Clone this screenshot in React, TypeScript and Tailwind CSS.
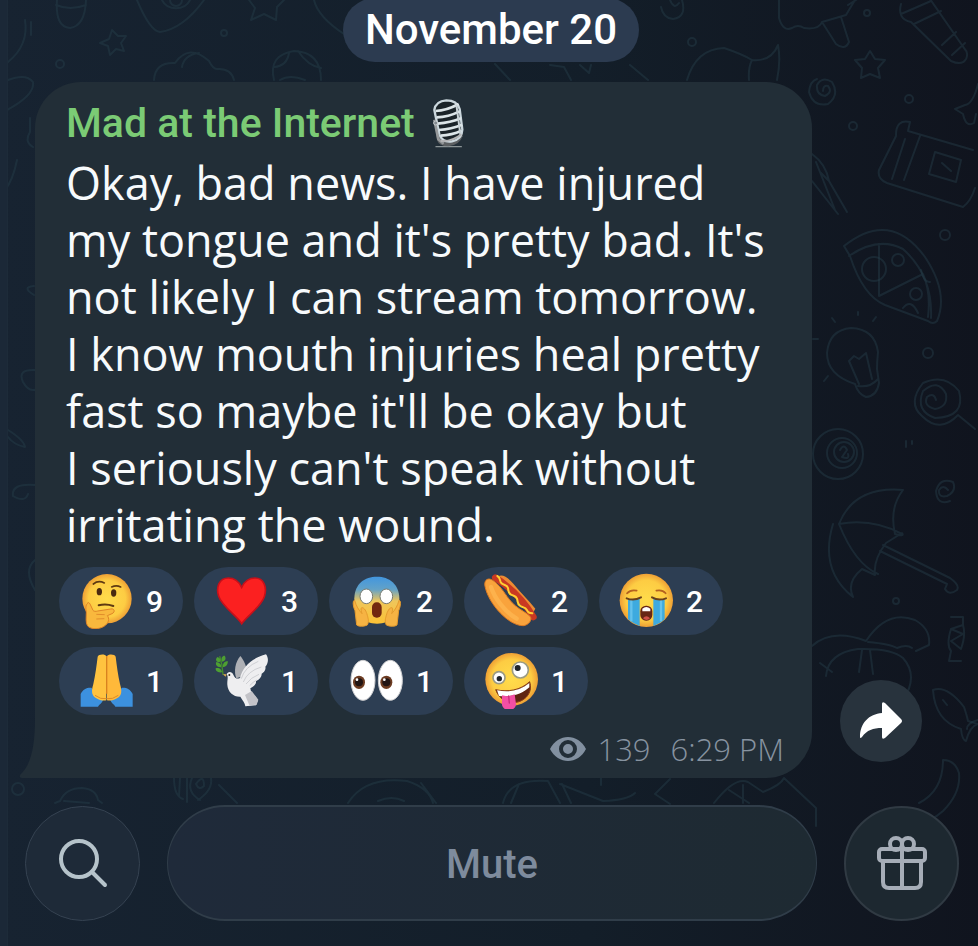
import type { ReactNode } from 'react'

type Reaction = {
  name: string
  count: number
  art: ReactNode
}

const message = [
  'Okay, bad news. I have injured',
  "my tongue and it's pretty bad. It's",
  'not likely I can stream tomorrow.',
  'I know mouth injuries heal pretty',
  "fast so maybe it'll be okay but",
  "I seriously can't speak without",
  'irritating the wound.',
].join('\n')

const reactions: Reaction[] = [
  {
    name: 'Thinking',
    count: 9,
    art: (
      <>
        <circle cx="87" cy="77" r="74" fill="url(#face)" />
        <path d="M46 33q15-12 33-3M101 42q14-7 27 0" stroke="#5f3a12" strokeWidth="5" fill="none" strokeLinecap="round" />
        <ellipse cx="64" cy="56" rx="8" ry="11" fill="#4a2a10" />
        <ellipse cx="107" cy="60" rx="8" ry="11" fill="#4a2a10" />
        <path d="M62 97q22-6 44 2" stroke="#5f3a12" strokeWidth="6" fill="none" strokeLinecap="round" />
        <path
          d="M29 91c-7 4-6 17-4 27 0 15-3 31 4 41 10 11 35 10 49 1 15-9 17-24 10-32l14-6c11-5 7-17-4-14l-39 6c-6 2-12 1-14-2l-9-19c-3-6-8-5-7-2z"
          fill="#f9b83d"
          stroke="#df8527"
          strokeWidth="3"
        />
        <path d="M55 124l25 1M55 138l24-1" stroke="#e18d2b" strokeWidth="3" fill="none" />
      </>
    ),
  },
  {
    name: 'Heart',
    count: 3,
    art: (
      <path
        d="M86 152C72 129 27 100 17 70 8 42 19 15 46 15c19 0 33 13 40 28 7-15 21-28 40-28 27 0 37 28 28 56-10 30-52 58-68 81z"
        fill="#fb2020"
        stroke="#c6101a"
        strokeWidth="5"
      />
    ),
  },
  {
    name: 'Screaming in fear',
    count: 2,
    art: (
      <>
        <path d="M19 76C20 32 50 11 87 11s66 22 67 65c1 50-26 76-67 76s-69-27-68-76z" fill="url(#fear)" />
        <ellipse cx="55" cy="70" rx="19" ry="22" fill="#fff" stroke="#777b72" strokeWidth="3" />
        <ellipse cx="115" cy="70" rx="19" ry="22" fill="#fff" stroke="#777b72" strokeWidth="3" />
        <rect x="72" y="88" width="29" height="46" rx="14" fill="#72270f" />
        <path
          d="M20 82c-7 0-5 18 1 31l5 43c5 5 23 5 32 0 6-10 2-22 0-29-3-12-9-23-16-23-5 0-2 12 0 18-9-10-18-23-22-40zM153 82c7 0 5 18-1 31l-5 43c-5 5-23 5-32 0-6-10-2-22 0-29 3-12 9-23 16-23 5 0 2 12 0 18 9-10 18-23 22-40z"
          fill="#f6b343"
          stroke="#e49a2e"
          strokeWidth="3"
        />
      </>
    ),
  },
  {
    name: 'Hot dog',
    count: 2,
    art: (
      <>
        <path d="M46 10c13-8 31 6 45 22 23 28 47 51 66 75l-9 16C118 78 81 49 46 10z" fill="#ed8b32" />
        <path d="M37 14c46 30 87 72 114 118" stroke="#c93822" strokeWidth="20" fill="none" strokeLinecap="round" />
        <path d="M6 40c-4-20 10-28 25-17 32 24 38 52 67 76 17 14 33 20 44 32 6 10-5 25-21 27C78 159 17 94 6 40z" fill="#f9a33c" stroke="#de7b22" strokeWidth="3" />
        <path d="M24 42c11 34 41 74 77 95" stroke="#ffb852" strokeWidth="13" fill="none" strokeLinecap="round" opacity=".7" />
        <path d="M43 9c12 5 4 17 14 23 11 7 15 3 18 13 2 9-1 14 9 20 10 5 14 2 18 12 3 9 0 15 9 21 9 7 15 4 20 12 4 8 6 10 17 11" stroke="#ffcf32" strokeWidth="6" fill="none" strokeLinecap="round" />
      </>
    ),
  },
  {
    name: 'Loudly crying',
    count: 2,
    art: (
      <>
        <circle cx="85" cy="82" r="80" fill="url(#face)" />
        <path d="M27 61q11-12 29-8M115 53q18-4 28 8" stroke="#b4611f" strokeWidth="5" fill="none" strokeLinecap="round" />
        <path d="M30 78h35v81q-18-6-35-20zM106 78h34v61q-15 14-34 20z" fill="#3daadf" />
        <path d="M40 80v65M129 80v65" stroke="#65c2ec" strokeWidth="7" />
        <path d="M26 76q21 9 43-3M102 73q20 12 42 3" stroke="#69401b" strokeWidth="6" fill="none" strokeLinecap="round" />
        <rect x="67" y="98" width="36" height="45" rx="17" fill="#672614" />
        <path d="M73 107q12-10 24 0v8H73z" fill="#fff" />
        <path d="M75 136q10-13 21 0-10 10-21 0z" fill="#ce5146" />
      </>
    ),
  },
  {
    name: 'Folded hands',
    count: 1,
    art: (
      <>
        <path d="M8 123c7-15 19-20 32-19l35 38c-2 8-12 13-15 19H8zM164 123c-7-15-19-20-32-19l-35 38c2 8 12 13 15 19h52z" fill="#3c91df" />
        <path d="M59 11c2-8 23-9 26-1v132c-13 3-32-3-40-15-5-9-3-20 1-34 6-26 10-58 13-82z" fill="#ffc33f" />
        <path d="M113 11c-2-8-23-9-26-1v132c13 3 32-3 40-15 5-9 3-20-1-34-6-26-10-58-13-82z" fill="#ffb93a" />
        <path d="M86 9v113" stroke="#d9821f" strokeWidth="4" />
        <path d="M51 127q17 13 35 10 18 3 35-10" stroke="#e08b25" strokeWidth="3" fill="none" />
      </>
    ),
  },
  {
    name: 'Dove of peace',
    count: 1,
    art: (
      <>
        <path d="M70 76c-8-20-4-48 12-67 10 12 21 31 19 57z" fill="#aeb0b5" />
        <path d="M41 63c5-9 16-8 20 2 5 11 11 14 20 10 8-34 36-60 78-71 8 10 8 26-2 37 3 9-5 18-11 21 0 12-10 19-17 22 2 11-9 17-17 22l3 13c9 8 21 19 19 25l-5 13-32 3c-1-10-8-17-15-29-20 1-38-14-39-36-1-15 4-22-2-32z" fill="#eeeef0" />
        <path d="M85 77q10-35 51-52M91 87q13-33 54-45M99 93q15-20 39-29M110 98q10-11 21-17" stroke="#cfd0d4" strokeWidth="3" fill="none" />
        <path d="M96 126l20-12 20 26-5 15-22 2z" fill="#c3c3c8" />
        <circle cx="49" cy="66" r="3" fill="#222" />
        <path d="M38 71l-10-8 13 1z" fill="#d7a653" />
        <path d="M30 65C29 42 25 25 20 10" stroke="#438c2b" strokeWidth="4" fill="none" />
        <path d="M19 28C6 26 8 17 13 12c10 3 12 12 6 16zM27 26c-5-12 3-19 8-18 6 9 1 17-8 18zM24 43C9 42 7 33 10 27c10 1 17 9 14 16zM30 42c-2-12 6-17 14-18 2 10-5 18-14 18zM27 58C13 60 7 53 8 46c10-3 19 4 19 12z" fill="#4d9f32" />
      </>
    ),
  },
  {
    name: 'Eyes',
    count: 1,
    art: (
      <>
        <ellipse cx="45" cy="82" rx="36" ry="60" fill="#fff" stroke="#cfcfd1" strokeWidth="3" />
        <ellipse cx="127" cy="82" rx="36" ry="60" fill="#fff" stroke="#cfcfd1" strokeWidth="3" />
        <ellipse cx="33" cy="88" rx="18" ry="20" fill="#6c3c22" />
        <ellipse cx="115" cy="88" rx="18" ry="20" fill="#6c3c22" />
        <circle cx="33" cy="88" r="12" fill="#211514" />
        <circle cx="115" cy="88" r="12" fill="#211514" />
        <circle cx="27" cy="80" r="4" fill="#fff" />
        <circle cx="109" cy="80" r="4" fill="#fff" />
      </>
    ),
  },
  {
    name: 'Zany face',
    count: 1,
    art: (
      <>
        <circle cx="86" cy="79" r="79" fill="url(#face)" />
        <circle cx="48" cy="74" r="18" fill="#fff" stroke="#9b9b83" strokeWidth="5" />
        <circle cx="112" cy="51" r="24" fill="#fff" stroke="#9b9b83" strokeWidth="5" />
        <circle cx="49" cy="77" r="8" fill="#20252a" />
        <circle cx="104" cy="45" r="9" fill="#20252a" />
        <path d="M38 110c37 8 74 2 102-24 10 31-10 54-35 61-31 8-58-10-67-37z" fill="#5f2512" stroke="#8e4017" strokeWidth="3" />
        <path d="M42 112c37 7 69 1 97-22v13c-23 21-58 31-91 26z" fill="#fff" />
        <path d="M57 127q19 6 38-3l4 29c0 22-36 26-42 3z" fill="#f44fa4" />
        <path d="M77 129l2 21" stroke="#c72c78" strokeWidth="4" strokeLinecap="round" />
      </>
    ),
  },
]

function Doodles() {
  return (
    <svg
      aria-hidden="true"
      viewBox="0 0 978 946"
      preserveAspectRatio="xMidYMin slice"
      className="absolute inset-0 -z-10 h-full w-full"
      fill="none"
      stroke="#27404a"
      strokeOpacity=".44"
      strokeWidth="2"
      strokeLinecap="round"
      strokeLinejoin="round"
    >
      {/* top edge */}
      <path d="M57 0q-2 27 13 28 15-2 16-28M56 5q14 6 30 0M137 0q13 31 23 32 23-3 44-32M162 0a15 13 0 0 0 28 0M170 0a6 6 0 0 0 12 0" />
      <path d="M112 30l6 6 8 0-5 7 3 8-8-2-6 6-2-9-8-3 9-4zM249 0l6 8-4 12 13-6 12 6 1-13 7-7M314 0q4 17 30 34" />
      <path d="M25 20q4 25-17 42M31 22v13M154 80q1-18 21-17 14-20 34-2 4 8 8 8 14-1 17 11M182 67q2-12 17-14" />
      <path d="M274 80q-6-25 20-29 27 1 27 29M274 67q13-1 15-14M298 51q10 15 23 17M280 80q10-6 25 0" />
      <path d="M8 80q18-7 25 2 2 13-26 28M495 64l15 16M550 65l14 2 7 13M580 65l9 8 2-8M630 65l18 15M687 80q9-31 37-32 18 6 28 12 19 2 26-15 3 16-1 35M752 60q-4 8-3 20" />
      <path d="M661 7q2 11 12 12 14-2 9-19M670 0q4 10 9 3M779 0v18q4 14 13 10 6-4 12 0 15 2 18-6l24-7 9-15M822 22l14 22q9 7 13-2l-8-25M848 5l8-5" />
      {/* right side */}
      <path d="M901 4q-4 15 10 18l40 39q11 5 15-2 3-6-2-11l-34-49M901 14l30-13M914 24l27-13M942 45l14-13M952 55l13-12M870 51l5 8 10 1-7 8 2 10-10-4-9 4 1-10-7-8 10-1z" />
      <path d="M823 91q0-6 5-5 5 6-3 10-9-1-8-11 5-9 15-3 8 13-4 22-15 3-19-12 1-11 8-13M978 84q-5 20-13 21l-10 4 8 5q3 14 11 9l2-9M896 135q0-16 14-13l-2 9 65 19M896 136l-17 34q-2 9 8 13l76 24q8-6 12-19M905 139l-13 40M920 136l-16 44M935 152l26 8-5 22-27-8zM942 163l9 8" />
      <path d="M812 154q14 10 17 27l18 31M816 162l19 48M812 181l26 33M829 181l-9-9" />
      <path d="M844 246q46-37 81 11 24 36 12 64-4 4-9 0l-43-16q-22-9-35-49zM849 256q29-20 54-7 30 27 28 69M879 244v52l44-22q8 18 5 43" />
      <circle cx="874" cy="269" r="12" />
      <circle cx="898" cy="260" r="6" />
      <circle cx="916" cy="294" r="6" />
      <path d="M903 308q8-10 15 5M921 270q3 13 9 12M855 384q-28-9-28-31 2-23 24-25 24 1 27 24-1 10-1 17l2 14q-2 13-13 14-8-3-11-13zM859 384l-10-23 5-5 5 3 7-6 6 26M858 386q12 2 20-7M858 315v-3M873 321l3-4M835 322l-3-4M818 339h-5M828 376l-4 5" />
      <path d="M936 400q-2-8-9-3-4 9 8 12 13-2 11-15-8-16-23-3-8 20 12 27 31-1 24-27-14-18-36-8-16 20-1 33 18 18 36-1l17 14" />
      <circle cx="838" cy="454" r="25" />
      <circle cx="842" cy="453" r="15" />
      <circle cx="844" cy="452" r="10" />
      <path d="M840 450q4-7 7 0l-5 7q8 3 6-3M839 524q15-38 64-34-14 18-8 44 10 3 7-1l-16 10q-13 17-11 32l-13-6q-16 13-9 28-34-27-20-73M839 524q33-6 63 10M839 524q16 40 39 50M883 545l67 33q10 7 7 12-8 6-12-1l2-5-67-33M912 441v3M906 441v6" />
      <path d="M948 490q-5-6-9 0-1 8 8 6 10-5 6-14-13-5-17 9 1 15 14 10M812 646q20-18 54-5 21-32 49-21 16 9 14 25l-13 6M868 642q22 2 29 6 10-4 15 0M826 676q2-23 32-27 34-1 45 9 16 18 0 42M820 663l12 9M862 650l-3 22M870 650l3 24" />
      <path d="M951 617h12v8l-12 4q-5 16 0 22l-2 10h12M951 629l12 5-12 7 10 8M963 625q3 10-2 24M933 690q14-5 31 17 3 9 4 14l10 3q-8 2-12 17-4-1-5-12-26-8-28-39zM943 700l4 5" />
      {/* below the bubble */}
      <circle cx="18" cy="789" r="6" />
      <path d="M55 803l5-2q6-13 22-13 14 1 16 12l4 3M64 801l25 2M174 778q0 18 9 21M180 778l-1 18M187 778v24M192 778q-6 14 8 22M211 778q2 12-13 22M219 785l18 18M196 784q8-11 8 2-5 5-8-2" />
      <path d="M348 803q17-27 59-22 22 7 26 22M378 801q14-6 26 0M421 783l15 20M503 803q6-25 45-22l12 22M511 803l8-19M562 784l9 19M560 784l43 17q25-1 32-8M601 778v7M670 779l-15 15 15 10M714 803q21-27 34-21l15 10q18-7 21-14l32 30v18M729 790l20 13M743 785v18" />
      <path d="M943 760q12 0 16 13 2 20-16 38-13 12-28 12M943 760q0 31-24 43M978 720q-11 3-11 9" />
      {/* left edge */}
      <path d="M17 160q-4 20-12 30M34 286q-13 1 0 9M35 370q-18-1-12 12 6 11 14 7M8 430q16 10 17 17-11-2-17-10M30 118v14q-6 10 3 15M35 485q-24-2-22 11 12 7 15-2M35 560q-12 10 0 30" />
      <circle cx="60" cy="64" r="4" />
      <circle cx="224" cy="33" r="3" />
      <circle cx="692" cy="42" r="4" />
      <circle cx="867" cy="13" r="3" />
      <circle cx="909" cy="99" r="4" />
      <circle cx="853" cy="126" r="4" />
      <circle cx="945" cy="235" r="5" />
      <circle cx="928" cy="353" r="5" />
      <circle cx="896" cy="601" r="3" />
    </svg>
  )
}

function Microphone() {
  return (
    <svg viewBox="0 0 108 156" className="h-[52px] w-9" role="img" aria-label="Microphone">
      <path d="M15 146h76" stroke="#8a9395" strokeWidth="4" strokeLinecap="round" />
      <path d="M10 70l8 56q6 19 34 19 33-3 43-30l-3-30z" fill="#5c5f61" />
      <path d="M10 36Q14 9 46 7q32 0 40 26l8 62q-1 28-31 35-29 4-38-21z" fill="#1b2429" stroke="#cbd7dd" strokeWidth="7" />
      <path d="M14 39q32-1 69-21M17 58q35-1 69-18M20 77q38-3 70-16M24 96q37-3 69-16M29 113q34-2 62-15" stroke="#dce5e8" strokeWidth="8" fill="none" />
      <path d="M76 20l13 96" stroke="#c8d2d6" strokeWidth="6" />
      <path d="M10 65l12 59 16 13" stroke="#96999b" strokeWidth="8" fill="none" />
      <circle cx="14" cy="75" r="6" fill="#81888d" stroke="#c7cccf" strokeWidth="3" />
      <path d="M29 129q34 3 62-20" stroke="#b4b4b5" strokeWidth="6" fill="none" />
    </svg>
  )
}

function ReactionChip({ name, count, art }: Reaction) {
  return (
    <button
      type="button"
      aria-label={`${name}, ${count}`}
      className="flex h-[68px] w-[124px] items-center gap-3 rounded-full bg-[#2d3e53] pl-[19px] text-[30px] font-medium text-white"
    >
      <svg viewBox="0 0 168 168" className="size-14 shrink-0" aria-hidden="true">
        {art}
      </svg>
      <span>{count}</span>
    </button>
  )
}

export default function App() {
  return (
    <main className="relative isolate flex min-h-screen flex-col overflow-hidden bg-linear-to-r from-[#172331] via-[#131e29] via-60% to-[#10141e] font-['Roboto',sans-serif]">
      <svg className="absolute size-0" aria-hidden="true">
        <defs>
          <radialGradient id="face">
            <stop offset="0" stopColor="#ffdc4b" />
            <stop offset=".75" stopColor="#fdcc43" />
            <stop offset="1" stopColor="#ee9f35" />
          </radialGradient>
          <linearGradient id="fear" x1="0" y1="0" x2="0" y2="1">
            <stop offset="0" stopColor="#4296df" />
            <stop offset=".27" stopColor="#62a2c8" />
            <stop offset=".52" stopColor="#efc65b" />
            <stop offset="1" stopColor="#fcc235" />
          </linearGradient>
        </defs>
      </svg>
      <Doodles />
      <div className="absolute inset-y-0 left-0 -z-10 w-2 border-r border-[#1d2b39] bg-[#1b2837]" />

      <time
        dateTime="11-20"
        className="-mt-0.5 ml-1 flex h-16 items-center self-center rounded-full bg-[#2c3b50] px-[22px] text-[42px] leading-none font-medium text-white"
      >
        November 20
      </time>

      <div className="mt-5 flex items-end gap-7 pr-14 pl-[35px]">
        <article className="relative min-w-0 flex-1 rounded-[46px] rounded-bl-none bg-[#222e37] pt-4 pr-7 pb-[7px] pl-[31px]">
          <svg viewBox="0 0 16 60" className="absolute bottom-0 -left-4 h-[60px] w-4" aria-hidden="true">
            <path d="M16 0v60H3c-3 0-3-3 0-5C12 45 16 29 16 0z" fill="#222e37" />
          </svg>
          <h2 className="flex h-[52px] items-center gap-4 text-[41px] font-medium text-[#7bcb75]">
            Mad at the Internet
            <Microphone />
          </h2>
          <p className="mt-1 font-['Open_Sans',sans-serif] text-[45px] leading-[57px] whitespace-pre-line text-[#f7fafc]">{message}</p>
          <div className="mt-3.5 -ml-[7px] flex flex-wrap gap-x-[11px] gap-y-3">
            {reactions.map((reaction) => (
              <ReactionChip key={reaction.name} {...reaction} />
            ))}
          </div>
          <footer className="mt-3 flex items-center justify-end gap-5 font-['Open_Sans',sans-serif] text-[31px] leading-[44px] font-light text-[#8793a0]">
            <span className="flex items-center gap-2.5">
              <svg viewBox="0 0 38 26" className="h-[26px] w-[38px]" role="img" aria-label="Views">
                <path d="M1 13C5 5 12 1 19 1s14 4 18 12c-4 8-11 12-18 12S5 21 1 13z" fill="#8290a0" />
                <circle cx="19" cy="13" r="7" fill="none" stroke="#222e37" strokeWidth="4" />
              </svg>
              139
            </span>
            <time>6:29 PM</time>
          </footer>
        </article>
        <button type="button" aria-label="Share" className="mb-4 flex size-[82px] shrink-0 items-center justify-center rounded-full bg-[#28333d]">
          <svg viewBox="0 0 44 38" className="h-[38px] w-11" aria-hidden="true">
            <path d="M23 2v9C10 12 1 21 1 35q0 2 2 0c5-7 11-9 20-9v9q0 3 3 1l16-15q2-2 0-4L26 1q-3-2-3 1z" fill="#fff" />
          </svg>
        </button>
      </div>

      <nav className="mt-auto flex items-center gap-[27px] pt-4 pr-[19px] pb-[25px] pl-[25px]">
        <button type="button" aria-label="Search" className="flex size-[115px] shrink-0 items-center justify-center rounded-full border border-[#354251] bg-[#1e2a38]">
          <svg viewBox="0 0 50 50" className="size-[50px]" fill="none" stroke="#b6c3ca" strokeWidth="4" strokeLinecap="round" aria-hidden="true">
            <circle cx="21" cy="21" r="18" />
            <path d="M34 34l13 13" />
          </svg>
        </button>
        <button
          type="button"
          className="h-[116px] flex-1 rounded-full border-2 border-x border-[#303d49] bg-linear-to-r from-[#1f2a3a] to-[#1e2a32] pt-1 text-[40px] font-medium text-[#7e8b9d]"
        >
          Mute
        </button>
        <button type="button" aria-label="Send a gift" className="flex size-[115px] shrink-0 items-center justify-center rounded-full border-2 border-[#303a43] bg-[#1d2830]">
          <svg viewBox="0 0 50 54" className="h-[54px] w-[50px]" fill="none" stroke="#a6adb7" strokeWidth="4" strokeLinejoin="round" aria-hidden="true">
            <rect x="2" y="13" width="46" height="12" rx="3" />
            <path d="M6 25v21q0 6 6 6h26q6 0 6-6V25M25 13v39" />
            <circle cx="19" cy="8" r="6" />
            <circle cx="31" cy="8" r="6" />
          </svg>
        </button>
      </nav>
    </main>
  )
}
